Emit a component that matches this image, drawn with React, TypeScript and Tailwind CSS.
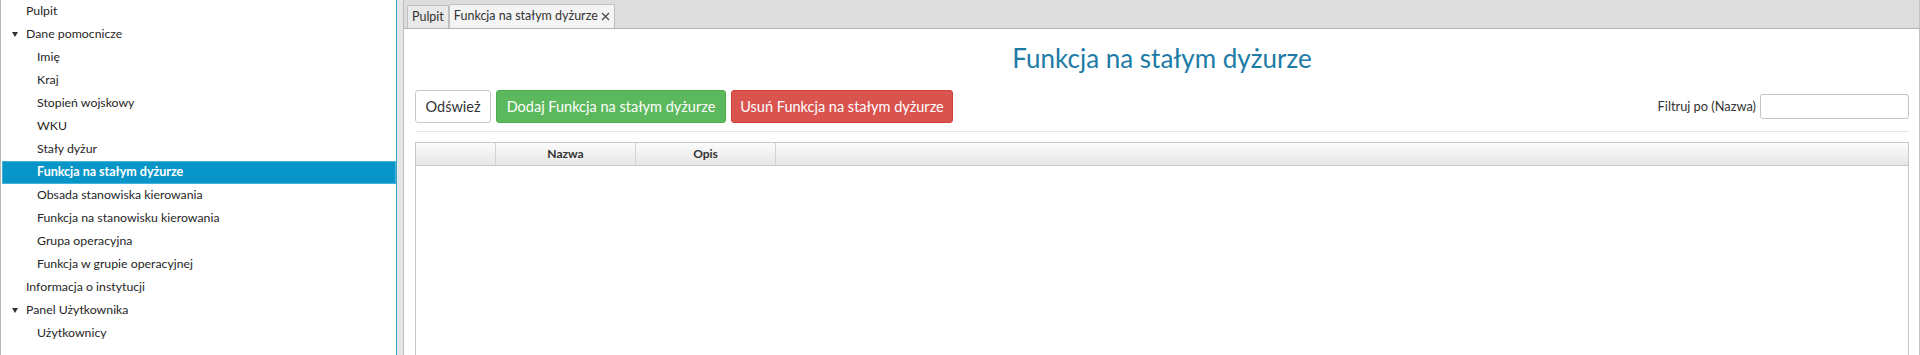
import React from "react";

type Item = { label: string; level: 1 | 2; expander?: boolean; selected?: boolean };

const items: Item[] = [
  { label: "Pulpit", level: 1 },
  { label: "Dane pomocnicze", level: 1, expander: true },
  { label: "Imię", level: 2 },
  { label: "Kraj", level: 2 },
  { label: "Stopień wojskowy", level: 2 },
  { label: "WKU", level: 2 },
  { label: "Stały dyżur", level: 2 },
  { label: "Funkcja na stałym dyżurze", level: 2, selected: true },
  { label: "Obsada stanowiska kierowania", level: 2 },
  { label: "Funkcja na stanowisku kierowania", level: 2 },
  { label: "Grupa operacyjna", level: 2 },
  { label: "Funkcja w grupie operacyjnej", level: 2 },
  { label: "Informacja o instytucji", level: 1 },
  { label: "Panel Użytkownika", level: 1, expander: true },
  { label: "Użytkownicy", level: 2 },
];

function Triangle() {
  return (
    <svg width="6" height="5" viewBox="0 0 6 5" className="block">
      <path d="M0 0 L6 0 L3 5 Z" fill="#333" />
    </svg>
  );
}

export default function App() {
  const font = { fontFamily: "Lato, 'Open Sans', Arial, sans-serif" };
  return (
    <div
      className="w-[1920px] h-[355px] flex overflow-hidden bg-white text-[#333]"
      style={font}
    >
      {/* Sidebar */}
      <div className="w-[397px] h-full border-l border-[#b8b8b8] border-r border-r-[#3aa7c7] pl-[1px] bg-white">
        {items.map((it, i) => (
          <div
            key={i}
            className={
              it.selected
                ? "h-[23px] flex items-center bg-[#0896c9] border border-[#46b2dc] text-white font-bold text-[12.5px]"
                : "h-[23px] flex items-center text-[12.3px] text-[#262626] border border-transparent"
            }
          >
            {it.level === 1 ? (
              <div className="w-[23px] flex items-center pl-[9px] shrink-0">
                {it.expander ? <Triangle /> : null}
              </div>
            ) : (
              <div className="w-[34px] shrink-0" />
            )}
            <span className="whitespace-nowrap">{it.label}</span>
          </div>
        ))}
      </div>

      {/* Divider */}
      <div className="w-[6px] h-full bg-[#e6e6e6]" />

      {/* Main */}
      <div className="flex-1 h-full flex flex-col border-l border-[#bdbdbd] border-r border-r-[#c4c4c4] min-w-0">
        {/* Tab bar */}
        <div className="h-[29px] shrink-0 bg-[#dddddd] border-b border-[#b4b4b4] flex items-end pl-[3px]">
          <div className="h-[23px] px-[4px] flex items-center bg-[#e9e9e9] border border-b-0 border-[#c0c0c0] rounded-t-[2px] text-[12.5px] text-[#333]">
            Pulpit
          </div>
          <div className="h-[24px] px-[4px] flex items-center gap-[3px] bg-[#f4f4f4] border border-b-0 border-[#c0c0c0] rounded-t-[2px] text-[12.5px] text-[#333]">
            <span>Funkcja na stałym dyżurze</span>
            <svg width="9" height="9" viewBox="0 0 9 9" className="block">
              <path d="M1 1 L8 8 M8 1 L1 8" stroke="#444" strokeWidth="1.2" />
            </svg>
          </div>
        </div>

        {/* Content */}
        <div className="flex-1 flex flex-col pl-[11px] pr-[10px] min-h-0">
          <div className="h-[61px] shrink-0 flex items-center justify-center pb-[4px]">
            <h1 className="text-[26px] leading-[32px] text-[#1d7ba6]" style={font}>
              Funkcja na stałym dyżurze
            </h1>
          </div>

          <div className="h-[42px] shrink-0 flex items-start border-b border-[#e6e6e6]">
            <div className="flex gap-[5px]">
              <button className="w-[76px] h-[33px] bg-white border border-[#c8c8c8] rounded-[3px] text-[14.5px] text-[#333] flex items-center justify-center">
                Odśwież
              </button>
              <button className="w-[230px] h-[33px] bg-[#5cb85c] border border-[#4cae4c] rounded-[3px] text-[14.5px] text-white flex items-center justify-center whitespace-nowrap">
                Dodaj Funkcja na stałym dyżurze
              </button>
              <button className="w-[222px] h-[33px] bg-[#d9534f] border border-[#d43f3a] rounded-[3px] text-[14.5px] text-white flex items-center justify-center whitespace-nowrap">
                Usuń Funkcja na stałym dyżurze
              </button>
            </div>
            <div className="flex-1" />
            <div className="h-[33px] flex items-center gap-[4px]">
              <span className="text-[12.8px] text-[#333] whitespace-nowrap">Filtruj po (Nazwa)</span>
              <div className="w-[149px] h-[25px] bg-white border border-[#c4c4c4] rounded-[3px]" />
            </div>
          </div>

          <div className="mt-[10px] flex-1 border border-[#c8c8c8] border-b-0 flex flex-col min-h-0">
            <div className="h-[23px] shrink-0 flex bg-gradient-to-b from-[#fbfbfb] to-[#e6e6e6] border-b border-[#c8c8c8] text-[12px] font-bold text-[#333]">
              <div className="w-[80px] border-r border-[#d2d2d2]" />
              <div className="w-[140px] border-r border-[#d2d2d2] flex items-center justify-center">Nazwa</div>
              <div className="w-[140px] border-r border-[#d2d2d2] flex items-center justify-center">Opis</div>
              <div className="flex-1" />
            </div>
            <div className="flex-1 bg-white" />
          </div>
        </div>
      </div>
    </div>
  );
}
